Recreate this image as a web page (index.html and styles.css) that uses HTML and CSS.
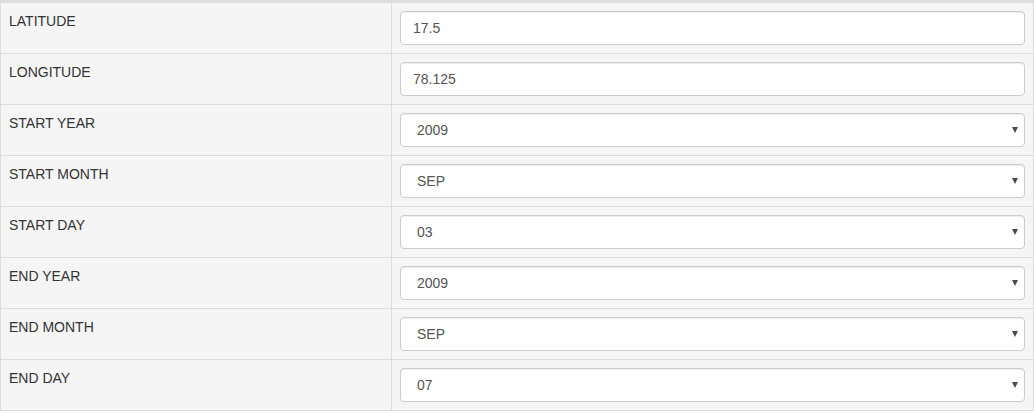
FILE: index.html
```html
<!DOCTYPE html>
<html>
<head>
<meta charset="utf-8">
<link rel="stylesheet" href="styles.css">
</head>
<body>
<table class="params">
  <tbody>
    <tr><td class="label">LATITUDE</td><td class="field"><input class="control" type="text" value="17.5"></td></tr>
    <tr><td class="label">LONGITUDE</td><td class="field"><input class="control" type="text" value="78.125"></td></tr>
    <tr><td class="label">START YEAR</td><td class="field"><div class="select-wrap"><select class="control"><option>2009</option></select></div></td></tr>
    <tr><td class="label">START MONTH</td><td class="field"><div class="select-wrap"><select class="control"><option>SEP</option></select></div></td></tr>
    <tr><td class="label">START DAY</td><td class="field"><div class="select-wrap"><select class="control"><option>03</option></select></div></td></tr>
    <tr><td class="label">END YEAR</td><td class="field"><div class="select-wrap"><select class="control"><option>2009</option></select></div></td></tr>
    <tr><td class="label">END MONTH</td><td class="field"><div class="select-wrap"><select class="control"><option>SEP</option></select></div></td></tr>
    <tr><td class="label">END DAY</td><td class="field"><div class="select-wrap"><select class="control"><option>07</option></select></div></td></tr>
  </tbody>
</table>
</body>
</html>
```
FILE: styles.css
```css
html, body {
  margin: 0;
  padding: 0;
  background: #fff;
}
body {
  font-family: "Liberation Sans", Arial, Helvetica, sans-serif;
  font-size: 14px;
  line-height: 20px;
  color: #333;
}
.params {
  width: 1034px;
  border-collapse: collapse;
  border-top: 3px solid #ddd;
  background: #f5f5f5;
}
.params td {
  border: 1px solid #ddd;
  padding: 8px;
  vertical-align: top;
}
.params tr:first-child td {
  border-top: 3px solid #ddd;
}
.label {
  width: 374px;
}
.control {
  display: block;
  box-sizing: border-box;
  width: 100%;
  height: 34px;
  padding: 6px 12px;
  font-family: "Liberation Sans", Arial, Helvetica, sans-serif;
  font-size: 14px;
  line-height: 20px;
  color: #555;
  background: #fff;
  border: 1px solid #ccc;
  border-radius: 4px;
  box-shadow: inset 0 1px 1px rgba(0,0,0,0.075);
  margin: 0;
}
.select-wrap {
  position: relative;
}
select.control {
  -webkit-appearance: none;
  appearance: none;
  padding-left: 16px;
}
.select-wrap::after {
  content: "";
  position: absolute;
  right: 7px;
  top: 14px;
  width: 0;
  height: 0;
  border-left: 3.5px solid transparent;
  border-right: 3.5px solid transparent;
  border-top: 6px solid #4a4a4a;
  pointer-events: none;
}
```
